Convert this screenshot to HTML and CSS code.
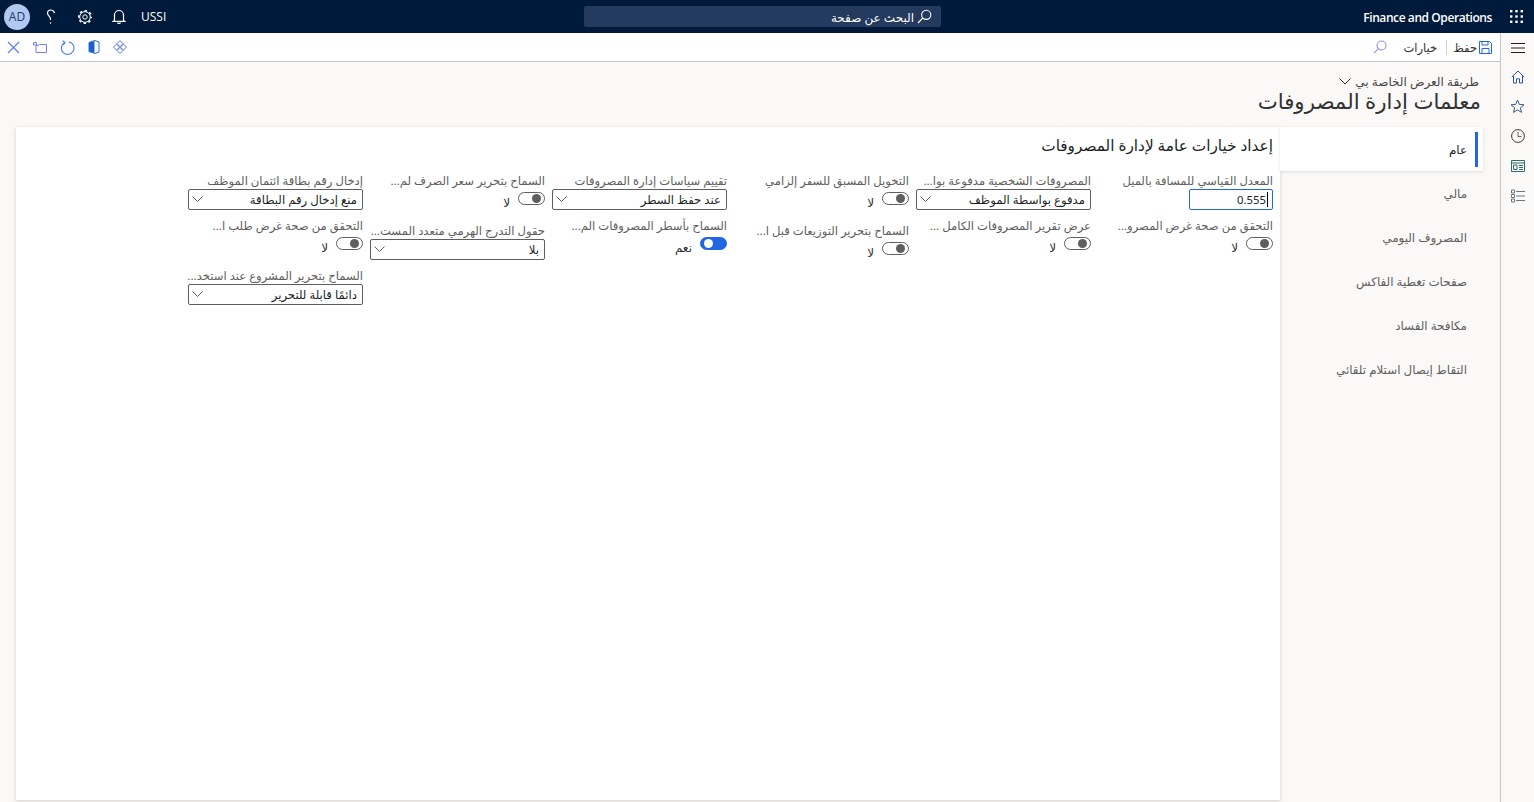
FILE: index.html
```html
<!DOCTYPE html>
<html lang="ar" dir="rtl">
<head>
<meta charset="utf-8">
<title>معلمات إدارة المصروفات</title>
<link rel="stylesheet" href="styles.css">
</head>
<body>
<header class="topbar">
  <div class="top-right">
    <svg class="waffle" width="13" height="13" viewBox="0 0 13 13" fill="#fff"><rect x="0" y="0" width="2.4" height="2.4"/><rect x="5.3" y="0" width="2.4" height="2.4"/><rect x="10.6" y="0" width="2.4" height="2.4"/><rect x="0" y="5.3" width="2.4" height="2.4"/><rect x="5.3" y="5.3" width="2.4" height="2.4"/><rect x="10.6" y="5.3" width="2.4" height="2.4"/><rect x="0" y="10.6" width="2.4" height="2.4"/><rect x="5.3" y="10.6" width="2.4" height="2.4"/><rect x="10.6" y="10.6" width="2.4" height="2.4"/></svg>
    <span class="brand">Finance and Operations</span>
  </div>
  <div class="search">
    <svg width="15" height="15" viewBox="0 0 15 15" fill="none" stroke="#fff" stroke-width="1.1"><circle cx="9.2" cy="5.8" r="4.6"/><path d="M5.8 9 1 14"/></svg>
    <span class="search-text">البحث عن صفحة</span>
  </div>
  <div class="top-left">
    <span class="company">USSI</span>
    <svg class="t-bell" width="14" height="15" viewBox="0 0 14 15" fill="none" stroke="#fff" stroke-width="1.2"><path d="M2.500 11.500V6a4.500 4.500 0 0 1 9 0v5.500l1.200 .8H1.300Z"/><path d="M5.500 13.500a1.600 1.600 0 0 0 3 0"/></svg>
    <svg class="t-gear" width="16" height="16" viewBox="0 0 16 16" fill="none" stroke="#fff"><circle cx="8" cy="8" r="2.200" stroke-width="1"/><circle cx="8" cy="8" r="5.300" stroke-width="1"/><circle cx="8" cy="8" r="6.300" stroke-width="1.500" stroke-dasharray="2.500 2.450" stroke-dashoffset="1.250"/></svg>
    <svg class="t-help" width="10" height="16" viewBox="0 0 10 16" fill="none" stroke="#fff" stroke-width="1.200"><path d="M8.500 4.200C8 2 6.500 1 4.800 1 3 1 1.500 2.300 1.500 4.200c0 2.300 3 3 3 5.800v1"/><circle cx="4.500" cy="14" r=".8" fill="#fff" stroke="none"/></svg>
    <span class="avatar">AD</span>
  </div>
</header>

<div class="shell">
  <nav class="rail">
    <svg width="14" height="10" viewBox="0 0 14 10" stroke="#201f1e" stroke-width="1"><path d="M0 .5h14M0 5h14M0 9.500h14"/></svg>
    <svg width="14" height="14" viewBox="0 0 14 14" fill="none" stroke="#2b579a" stroke-width="1"><path d="M.8 7 7 1l6.200 6M2.500 5.800V13h3V8.800h3V13h3V5.800"/></svg>
    <svg width="15" height="14" viewBox="0 0 15 14" fill="none" stroke="#3b5a80" stroke-width="1"><path d="m7.500 1 1.800 4.400 4.700.4-3.600 3 1.100 4.600-4-2.500-4 2.500 1.100-4.600-3.600-3 4.700-.4Z"/></svg>
    <svg width="14" height="14" viewBox="0 0 14 14" fill="none" stroke="#3a3a3a" stroke-width="1"><circle cx="7" cy="7" r="6.400"/><path d="M7 3v4.500h3.500" stroke="#8a5a3c"/></svg>
    <svg width="14" height="12" viewBox="0 0 14 12" fill="none" stroke="#2e6b6b" stroke-width="1"><path d="M.5.500h13v11H.5zM.5 3h13"/><path d="M2.500 5h3.500v4.500H2.500zM8 5.500h4M8 7.500h4M8 9.500h4"/></svg>
    <svg width="14" height="14" viewBox="0 0 14 14" fill="none" stroke="#6b7a80" stroke-width="1"><path d="M.5 1h3v3h-3zM.5 5.500h3v3h-3zM.5 10h3v3h-3zM5 2.500h9M5 7h9M5 11.500h9"/></svg>
  </nav>
  <div class="workspace">
    <div class="cmdbar">
      <div class="cmd-start">
        <span class="cmd-item">
          <svg width="13" height="13" viewBox="0 0 13 13" fill="none" stroke="#2266e3" stroke-width="1"><path d="M.5.500h10l2 2v10H.5z"/><path d="M3 .500v3.500h6V.500M3 12.500V7.500h7v5"/></svg>
          <span>حفظ</span>
        </span>
        <span class="cmd-div"></span>
        <span class="cmd-text">خيارات</span>
        <svg class="cmd-find" width="14" height="14" viewBox="0 0 14 14" fill="none" stroke="#9b8ee8" stroke-width="1.100"><circle cx="8.500" cy="5.500" r="4.500"/><path d="M5.300 8.800 1 13"/></svg>
      </div>
      <div class="cmd-end">
        <svg width="14" height="14" viewBox="0 0 14 14" fill="none" stroke="#5a78d8" stroke-width="1"><path d="m7 .7 3 3-3 3-3-3zM3.600 4.100l3 3-3 3-3-3zM10.400 4.100l3 3-3 3-3-3zM7 7.500l3 3-3 3-3-3z"/></svg>
        <svg width="12" height="14" viewBox="0 0 12 14" fill="none"><path d="M1 2.500 7 .5l4 1.500v10l-4 1.500-6-2z" stroke="#2b6fd8" stroke-width="1"/><path d="M1 2.500 6.500 1v12L1 11.500z" fill="#1e5fd0"/></svg>
        <svg width="15" height="15" viewBox="0 0 15 15" fill="none" stroke="#4f7fe0" stroke-width="1.100"><path d="M4.800 2.500a6.300 6.300 0 1 0 4-.6"/><path d="M2.700 .7l2.300 1.800-1.800 2.400"/></svg>
        <svg width="14" height="11" viewBox="0 0 14 11" fill="none" stroke="#7a7ae0" stroke-width="1"><path d="M3 3.500v7h10.500v-8H6.500L5 3.500Z"/><path d="M.5.500h3v2.500h-3z"/></svg>
        <svg width="13" height="13" viewBox="0 0 13 13" fill="none" stroke="#5a78d8" stroke-width="1.100"><path d="m1 1 11 11M12 1 1 12"/></svg>
      </div>
    </div>

    <main class="page">
      <div class="view-picker">
        <span>طريقة العرض الخاصة بي</span>
        <svg width="12" height="7" viewBox="0 0 12 7" fill="none" stroke="#323130"><path d="m.5.500 5.500 5.500L11.500.500"/></svg>
      </div>
      <h1 class="title">معلمات إدارة المصروفات</h1>

      <div class="panel">
        <ul class="tabs">
          <li class="tab active"><span>عام</span></li>
          <li class="tab"><span>مالي</span></li>
          <li class="tab"><span>المصروف اليومي</span></li>
          <li class="tab"><span>صفحات تغطية الفاكس</span></li>
          <li class="tab"><span>مكافحة الفساد</span></li>
          <li class="tab"><span>التقاط إيصال استلام تلقائي</span></li>
        </ul>
        <section class="card">
          <h2 class="card-title">إعداد خيارات عامة لإدارة المصروفات</h2>
          <div class="cols">
            <div class="col">
              <div class="field f-input">
                <label>المعدل القياسي للمسافة بالميل</label>
                <div class="numbox"><span class="caret"></span><span>0.555</span></div>
              </div>
              <div class="field f-toggle">
                <label>التحقق من صحة غرض المصرو...</label>
                <div class="toggle-row"><span class="toggle"><i></i></span><span>لا</span></div>
              </div>
            </div>
            <div class="col">
              <div class="field f-input">
                <label>المصروفات الشخصية مدفوعة بوا...</label>
                <div class="select"><span>مدفوع بواسطة الموظف</span><svg width="11" height="6" viewBox="0 0 11 6" fill="none" stroke="#605e5c"><path d="m.5.500 5 5 5-5"/></svg></div>
              </div>
              <div class="field f-toggle">
                <label>عرض تقرير المصروفات الكامل ...</label>
                <div class="toggle-row"><span class="toggle"><i></i></span><span>لا</span></div>
              </div>
            </div>
            <div class="col">
              <div class="field f-toggle">
                <label>التخويل المسبق للسفر إلزامي</label>
                <div class="toggle-row"><span class="toggle"><i></i></span><span>لا</span></div>
              </div>
              <div class="field f-toggle">
                <label>السماح بتحرير التوزيعات قبل ا...</label>
                <div class="toggle-row"><span class="toggle"><i></i></span><span>لا</span></div>
              </div>
            </div>
            <div class="col">
              <div class="field f-input">
                <label>تقييم سياسات إدارة المصروفات</label>
                <div class="select"><span>عند حفظ السطر</span><svg width="11" height="6" viewBox="0 0 11 6" fill="none" stroke="#605e5c"><path d="m.5.500 5 5 5-5"/></svg></div>
              </div>
              <div class="field f-toggle">
                <label>السماح بأسطر المصروفات الم...</label>
                <div class="toggle-row"><span class="toggle on"><i></i></span><span>نعم</span></div>
              </div>
            </div>
            <div class="col">
              <div class="field f-toggle">
                <label>السماح بتحرير سعر الصرف لم...</label>
                <div class="toggle-row"><span class="toggle"><i></i></span><span>لا</span></div>
              </div>
              <div class="field f-input">
                <label>حقول التدرج الهرمي متعدد المست...</label>
                <div class="select"><span>بلا</span><svg width="11" height="6" viewBox="0 0 11 6" fill="none" stroke="#605e5c"><path d="m.5.500 5 5 5-5"/></svg></div>
              </div>
            </div>
            <div class="col">
              <div class="field f-input">
                <label>إدخال رقم بطاقة ائتمان الموظف</label>
                <div class="select"><span>منع إدخال رقم البطاقة</span><svg width="11" height="6" viewBox="0 0 11 6" fill="none" stroke="#605e5c"><path d="m.5.500 5 5 5-5"/></svg></div>
              </div>
              <div class="field f-toggle">
                <label>التحقق من صحة غرض طلب ا...</label>
                <div class="toggle-row"><span class="toggle"><i></i></span><span>لا</span></div>
              </div>
              <div class="field f-input">
                <label>السماح بتحرير المشروع عند استخد...</label>
                <div class="select"><span>دائمًا قابلة للتحرير</span><svg width="11" height="6" viewBox="0 0 11 6" fill="none" stroke="#605e5c"><path d="m.5.500 5 5 5-5"/></svg></div>
              </div>
            </div>
          </div>
        </section>
      </div>
    </main>
  </div>
</div>
</body>
</html>
```

FILE: styles.css
```css
* { box-sizing: border-box; }
html, body { margin: 0; height: 100%; overflow: hidden; }
body {
  font-family: "Noto Sans", "DejaVu Sans", sans-serif;
  font-size: 12px;
  color: #323130;
  background: #faf9f8;
  display: flex;
  flex-direction: column;
}

/* top bar */
.topbar {
  height: 33px;
  flex: none;
  background: #001a3b;
  color: #fff;
  display: grid;
  grid-template-columns: 593px 357px 1fr;
  align-items: center;
}
.top-right { display: flex; align-items: center; padding-right: 11px; }
.waffle { margin-left: 18px; }
.brand { font-family: "Open Sans", sans-serif; font-size: 12px; font-weight: 600; letter-spacing: -0.42px; line-height: 18px; padding-top: 2px; }
.search {
  height: 21px;
  background: #243a5e;
  border-radius: 2px;
  display: flex;
  align-items: center;
  gap: 3px;
  padding-right: 9px;
  font-size: 12px;
}
.search-text { padding-top: 1px; }
.top-left { display: flex; align-items: center; justify-content: flex-end; padding-left: 4px; }
.company { font-family: "Open Sans", sans-serif; font-size: 12px; }
.t-bell { margin: 0 15px 0 19px; }
.t-gear { margin-left: 21px; }
.t-help { margin-left: 16px; }
.avatar {
  width: 26px;
  height: 26px;
  border-radius: 50%;
  background: #b1c8f0;
  color: #243a5e;
  font-family: "Open Sans", sans-serif;
  font-size: 12px;
  display: flex;
  align-items: center;
  justify-content: center;
}

/* shell */
.shell { flex: 1; display: flex; min-height: 0; }
.rail {
  width: 34px;
  flex: none;
  border-left: 1px solid #c8c6c4;
  background: #faf9f8;
  display: grid;
  grid-template-rows: 28px 29px repeat(4, 30px);
  align-content: start;
  justify-items: center;
  align-items: center;
  padding-top: 1px;
}
.workspace { flex: 1; min-width: 0; display: flex; flex-direction: column; }

/* command bar */
.cmdbar {
  height: 29px;
  flex: none;
  background: #fff;
  border-bottom: 1px solid #c8c6c4;
  display: flex;
  align-items: center;
  justify-content: space-between;
  padding: 0 8px 0 7px;
  font-size: 11.500px;
}
.cmd-start, .cmd-end, .cmd-item { display: flex; align-items: center; }
.cmd-item { gap: 2px; }
.cmd-div { width: 1px; height: 15px; background: #d2d0ce; margin: 0 6px 0 9px; }
.cmd-find { margin-right: 16px; }
.cmd-end { gap: 13px; }

/* page */
.page { flex: 1; min-height: 0; display: flex; flex-direction: column; padding: 0 17px 2px 16px; }
.view-picker { display: flex; align-items: center; gap: 4px; height: 17px; margin-top: 11px; margin-right: 4px; font-size: 12px; color: #484644; }
.title { margin: 0 2px 0 0; font-size: 21.300px; font-weight: 400; line-height: 22px; height: 37px; color: #323130; }

.panel { flex: 1; min-height: 0; display: flex; }
.tabs { width: 203px; margin: 0; padding: 0; list-style: none; flex: none; }
.tab { height: 44px; display: flex; align-items: center; padding-right: 16px; color: #605e5c; font-size: 11.900px; }
.tab.active {
  background: #fff;
  color: #201f1e;
  position: relative;
  box-shadow: 0 1px 3px rgba(0,0,0,.12);
}
.tab.active::before {
  content: "";
  position: absolute;
  right: 5px;
  top: 5px;
  bottom: 4px;
  width: 3px;
  background: #2266e3;
}
.card { flex: 1; min-width: 0; background: #fff; box-shadow: 0 1px 4px rgba(0,0,0,.16); padding-right: 7px; }
.card-title { margin: 0; height: 46px; padding-top: 8px; font-size: 15.300px; line-height: 20px; font-weight: 400; color: #201f1e; }

.cols { display: flex; gap: 7px; }
.col { width: 175px; flex: none; }
.field label { display: block; height: 17px; line-height: 15px; color: #605e5c; font-size: 11.600px; white-space: nowrap; }
.f-input { height: 45px; }
.f-toggle { height: 50px; }
.select, .numbox {
  height: 21px;
  margin-top: -1px;
  border: 1px solid #605e5c;
  border-radius: 2px;
  background: #fff;
  display: flex;
  align-items: center;
  color: #201f1e;
  font-size: 11.700px;
  line-height: 16px;
}
.select { justify-content: space-between; padding: 0 5px 2px 3px; }
.numbox { width: 84px; border-color: #2266e3; padding-right: 4px; font-size: 11.300px; }
.caret { width: 1px; height: 15px; background: #000; margin-left: 1px; }
.toggle-row { display: flex; align-items: flex-start; gap: 8px; color: #323130; padding-top: 2px; line-height: 16px; }
.toggle-row > span:last-child { margin-top: 3px; }
.toggle {
  width: 27px;
  height: 13px;
  flex: none;
  border: 1px solid #605e5c;
  border-radius: 7px;
  display: flex;
  align-items: center;
  padding: 0 3px;
  background: #fff;
}
.toggle i { width: 9px; height: 9px; border-radius: 50%; background: #605e5c; }
.toggle.on { background: #2266e3; border-color: #2266e3; justify-content: flex-end; }
.toggle.on i { background: #fff; }
```
